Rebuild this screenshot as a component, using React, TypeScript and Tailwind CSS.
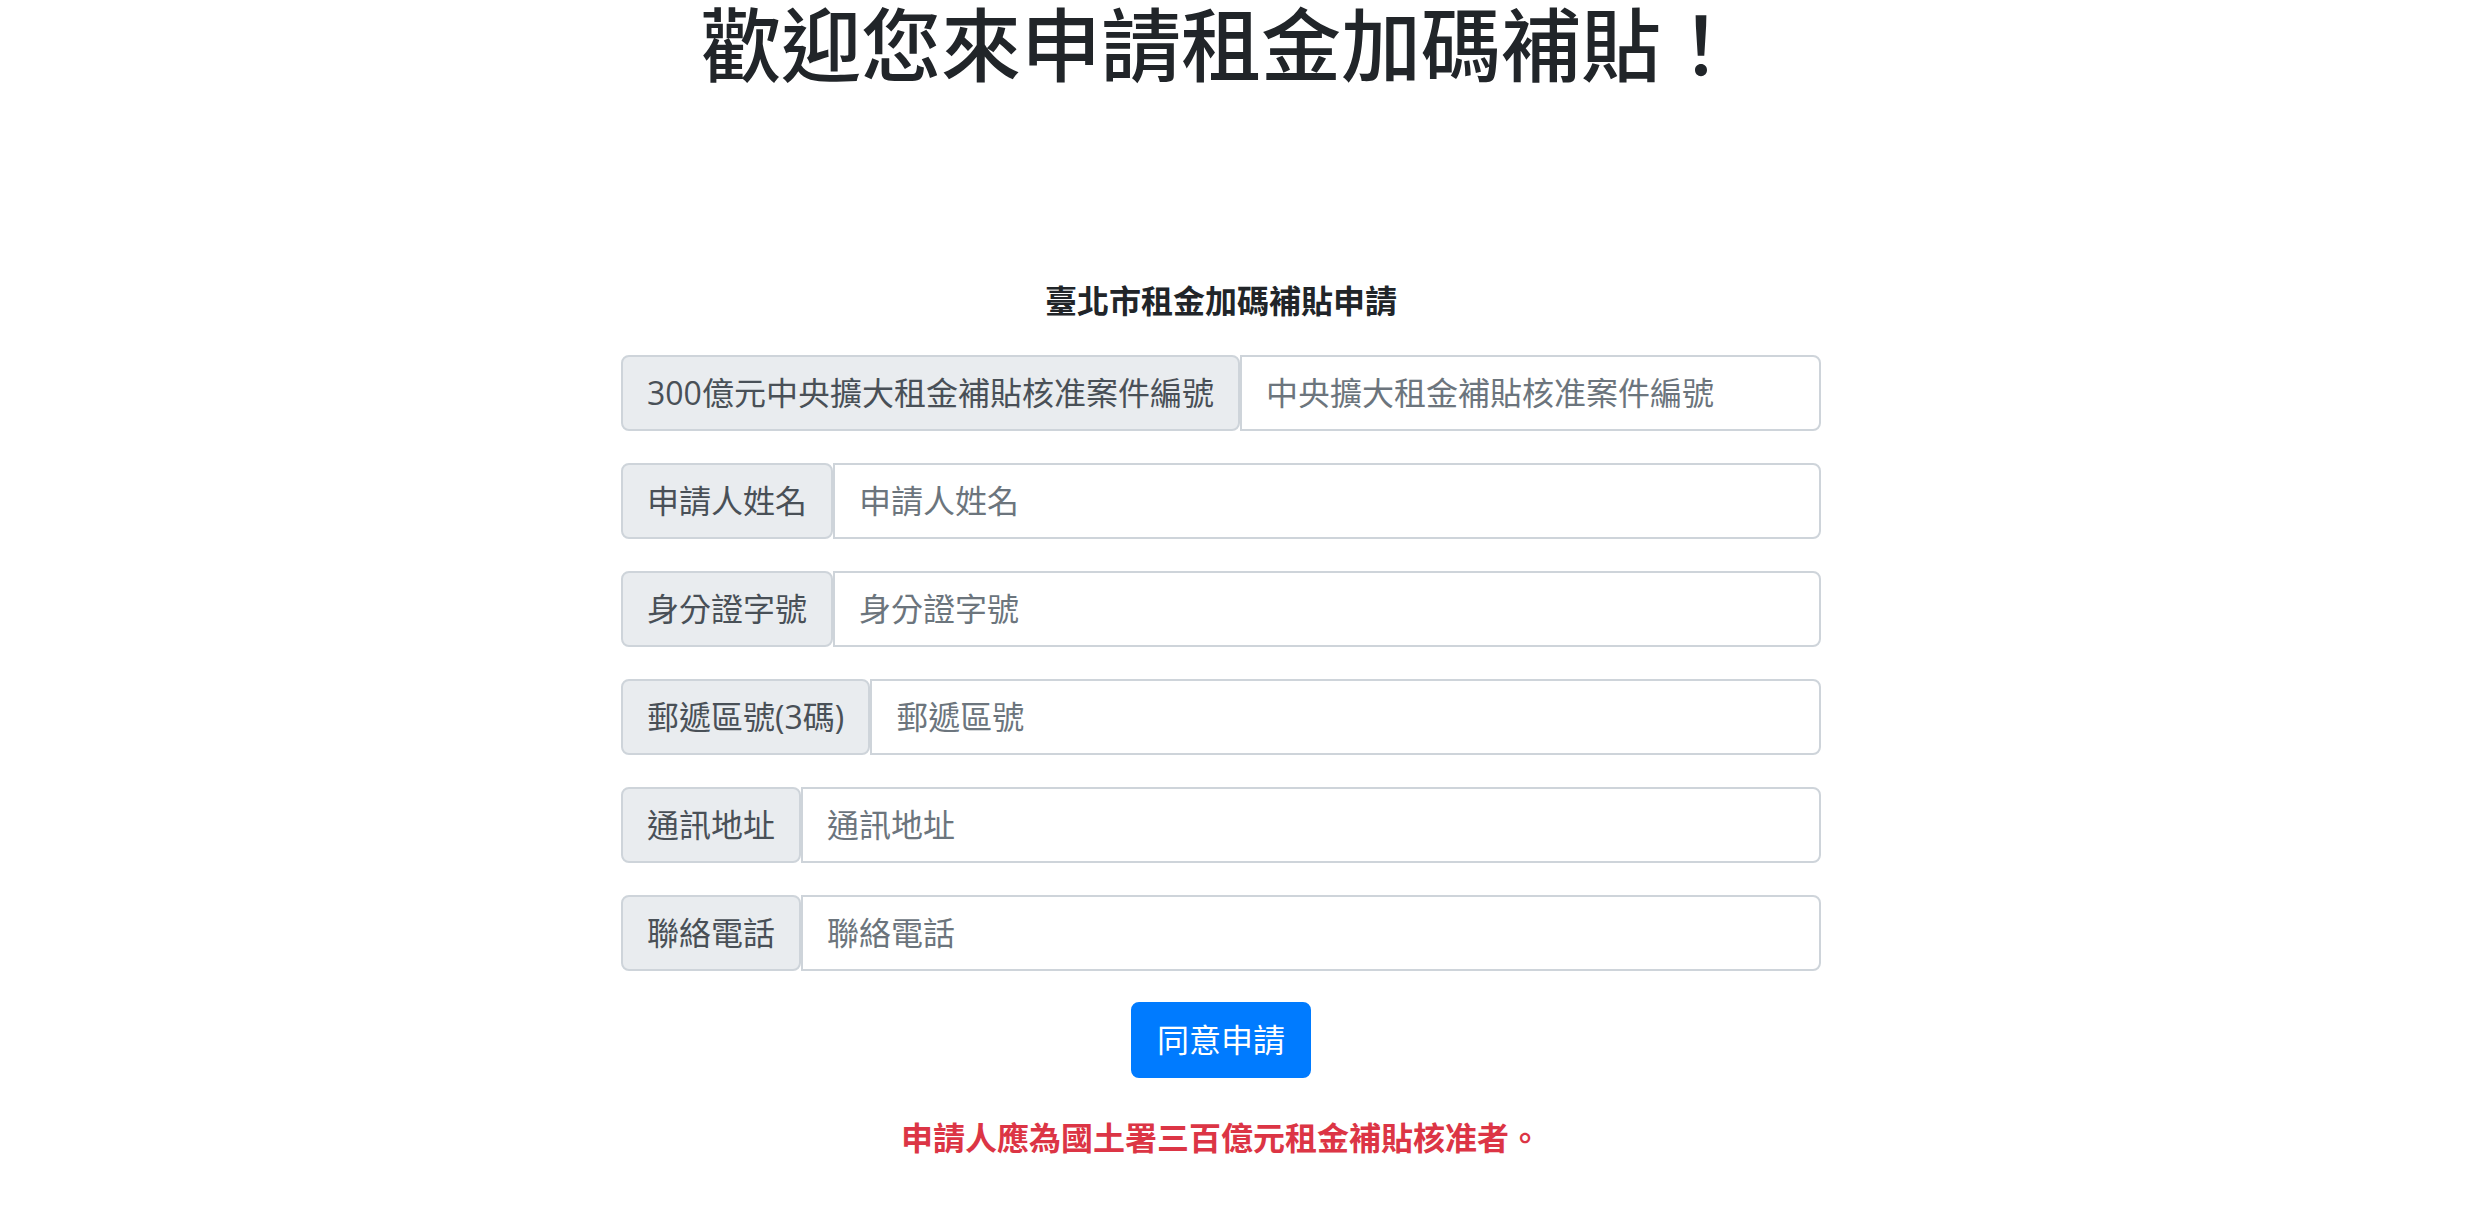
import React from "react";

const rows = [
  { label: "300億元中央擴大租金補貼核准案件編號", placeholder: "中央擴大租金補貼核准案件編號" },
  { label: "申請人姓名", placeholder: "申請人姓名" },
  { label: "身分證字號", placeholder: "身分證字號" },
  { label: "郵遞區號(3碼)", placeholder: "郵遞區號" },
  { label: "通訊地址", placeholder: "通訊地址" },
  { label: "聯絡電話", placeholder: "聯絡電話" },
];

const font = "font-['Open_Sans','Noto_Sans_CJK_TC',sans-serif]";

export default function App() {
  return (
    <div className={`min-h-screen bg-white pr-[41px] text-[#212529] ${font}`}>
      <h1 className="text-center text-[80px] leading-[88px] font-medium">
        歡迎您來申請租金加碼補貼！
      </h1>

      <div className="mx-auto mt-[189px] w-[1200px]">
        <h5 className="text-center text-[32px] leading-[48px] font-bold">
          臺北市租金加碼補貼申請
        </h5>

        <form className="mt-[30px]" onSubmit={(e) => e.preventDefault()}>
          {rows.map((row) => (
            <div key={row.label} className="mb-[32px] flex h-[76px] items-stretch">
              <span className="flex shrink-0 items-center whitespace-nowrap rounded-[8px] border-2 border-[#ced4da] bg-[#e9ecef] px-[24px] text-[32px] leading-[48px] text-[#495057]">
                {row.label}
              </span>
              <input
                type="text"
                placeholder={row.placeholder}
                className="min-w-0 flex-1 rounded-r-[8px] border-2 border-[#ced4da] bg-white px-[24px] text-[32px] leading-[48px] text-[#495057] outline-none placeholder:text-[#6c757d]"
              />
            </div>
          ))}

          <div className="-mt-[1px] flex justify-center">
            <button
              type="submit"
              className="rounded-[8px] border-2 border-[#007bff] bg-[#007bff] px-[24px] py-[12px] text-[32px] leading-[48px] text-white"
            >
              同意申請
            </button>
          </div>
        </form>

        <p className="mt-[36px] text-center text-[32px] leading-[48px] font-bold text-[#dc3545]">
          申請人應為國土署三百億元租金補貼核准者。
        </p>
      </div>
    </div>
  );
}
